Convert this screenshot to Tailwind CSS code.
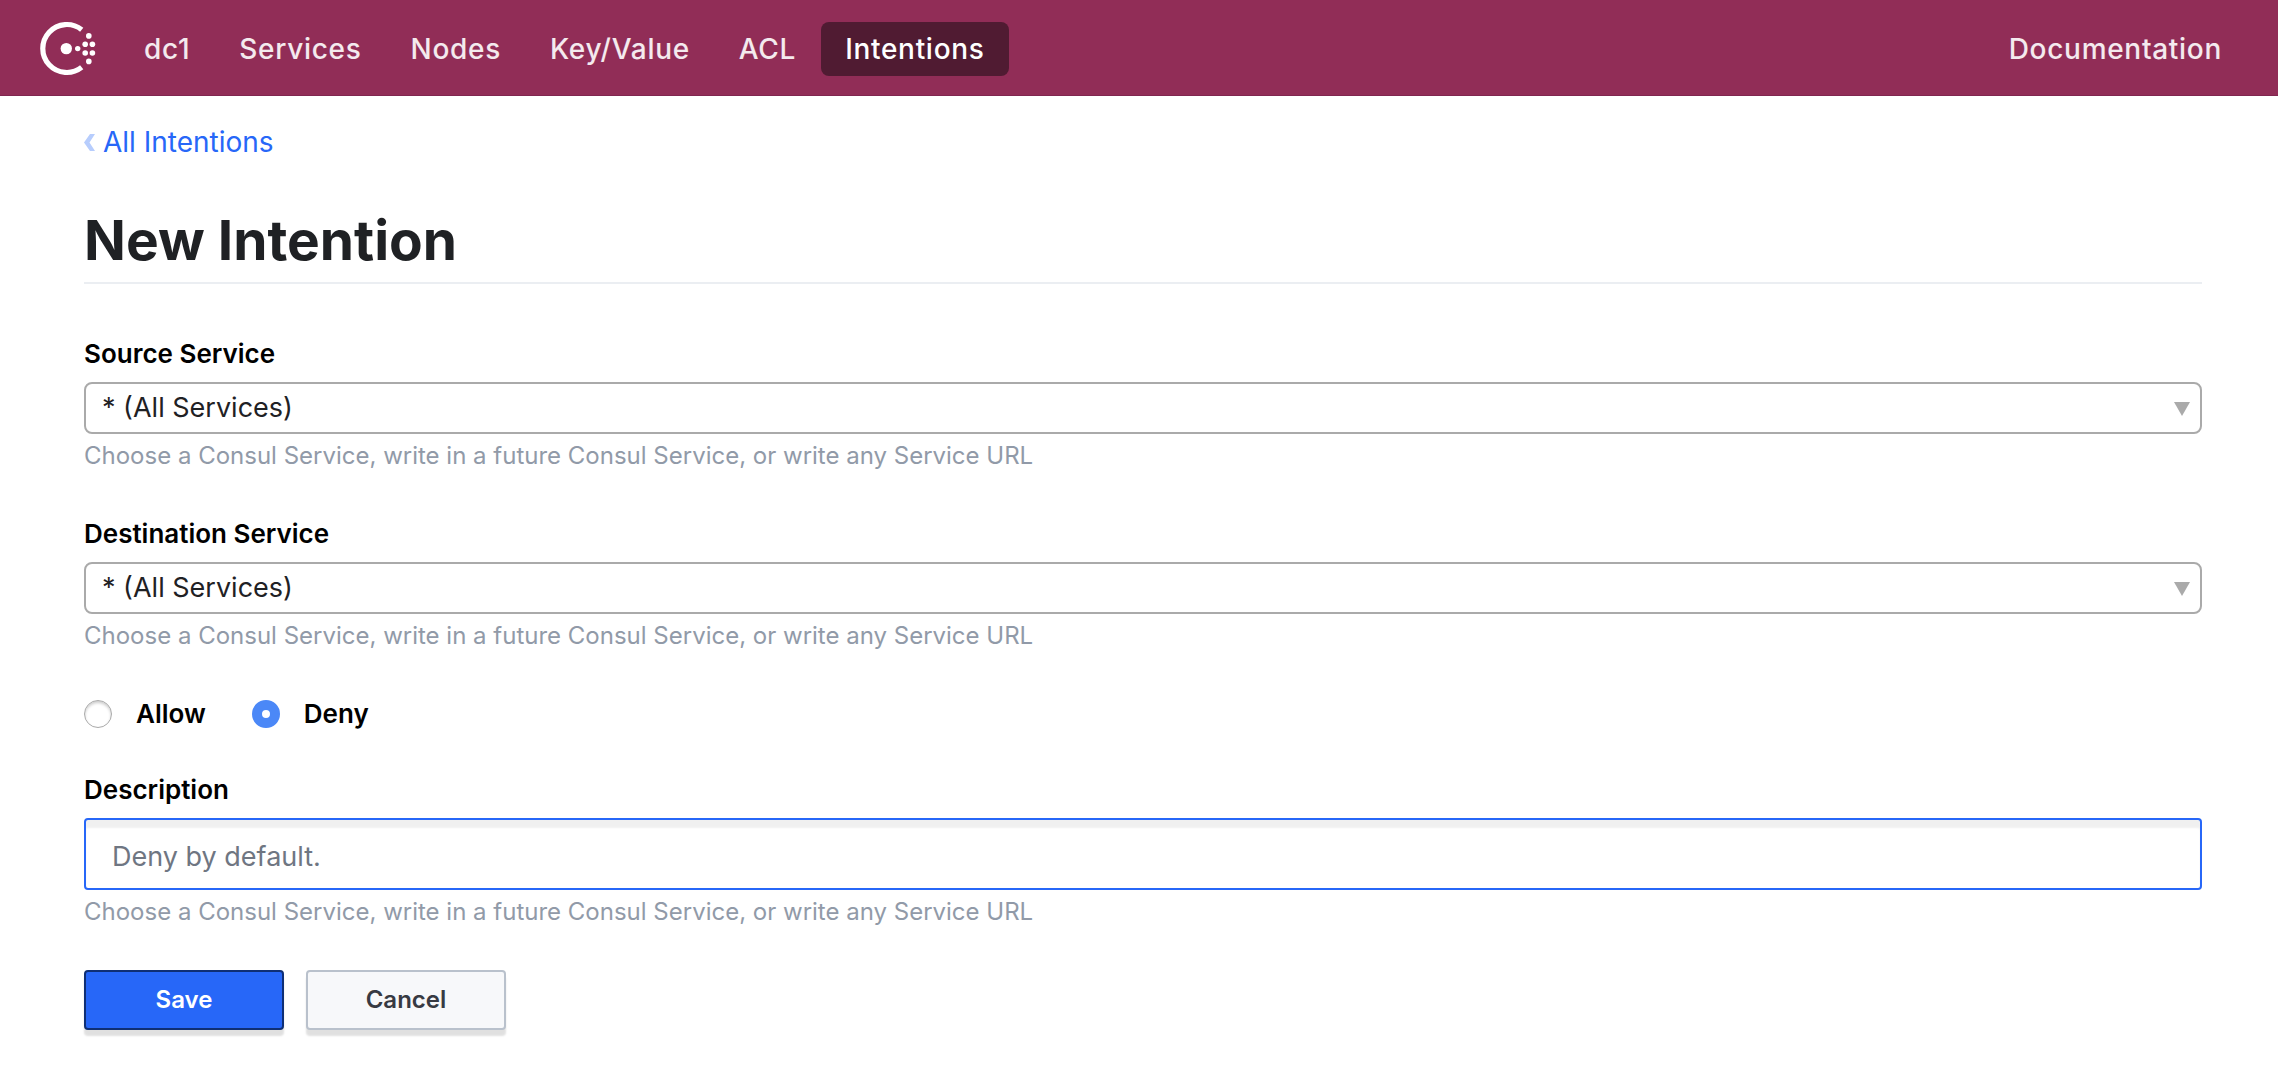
<!DOCTYPE html>
<html lang="en">
<head>
<meta charset="utf-8">
<title>New Intention - Consul</title>
<script src="https://cdn.jsdelivr.net/npm/@tailwindcss/browser@4"></script>
</head>
<body class="min-h-screen bg-white font-['Inter',sans-serif] text-[#1f2124]">
<header class="flex h-24 items-center border-b border-[#802650] bg-[#912d57] pt-[3px] pr-8 pl-10 text-[28px] leading-[54px] font-medium tracking-wide text-white/90">
  <a href="#" aria-label="Consul" class="mr-6 shrink-0">
    <svg class="block h-14 w-14" viewBox="0 1 56 56" fill="#fff">
      <path d="M41.7 9.700A24 24 0 1 0 41.700 47.300" fill="none" stroke="#fff" stroke-width="5.200"/>
      <circle cx="26.300" cy="28.600" r="5.700"/><circle cx="37.700" cy="28.600" r="2.700"/>
      <circle cx="45.200" cy="24.200" r="2.800"/><circle cx="52.400" cy="24.200" r="2.800"/>
      <circle cx="45.200" cy="33" r="2.800"/><circle cx="52.400" cy="33" r="2.800"/>
      <circle cx="48.800" cy="15.900" r="2.800"/><circle cx="48.800" cy="41.400" r="2.800"/>
    </svg>
  </a>
  <nav class="flex flex-1 items-center gap-px">
    <a href="#" class="px-6">dc1</a>
    <a href="#" class="px-6">Services</a>
    <a href="#" class="px-6">Nodes</a>
    <a href="#" class="px-6">Key/Value</a>
    <a href="#" class="px-6">ACL</a>
    <a href="#" aria-current="page" class="rounded-lg bg-[#501b32] px-6 text-white">Intentions</a>
    <a href="#" class="ml-auto px-6">Documentation</a>
  </nav>
</header>
<main class="pt-6 pr-[76px] pb-9 pl-[84px]">
  <nav aria-label="Breadcrumb" class="flex text-[28px] leading-[44px]">
    <a href="#" class="flex items-center gap-2 text-[#2767f8]">
      <svg class="h-[17px] w-[11px]" viewBox="0 0 11 17" fill="#b7cdfd"><path d="M6 0h5L5.500 8.500 11 17H6L0 8.500z"/></svg>
      All Intentions
    </a>
  </nav>
  <h1 class="mt-10 border-b-2 border-[#ebeef2] pb-1.5 text-[55px] leading-[72px] font-bold">New Intention</h1>
  <form class="mt-[50px]">
    <div class="mb-10">
      <label for="source" class="block text-[26px] leading-10 font-semibold text-black">Source Service</label>
      <div class="relative mt-2">
        <select id="source" class="block h-[52px] w-full appearance-none rounded-lg border-2 border-[#aaa] bg-white px-4 text-[27px] leading-[48px]"><option>* (All Services)</option></select>
        <svg class="pointer-events-none absolute top-5 right-3 h-3.5 w-4" viewBox="0 0 16 14" fill="#aaa"><path d="M0 0h16L8 14z"/></svg>
      </div>
      <p class="mt-1 text-[24px] leading-[36px] text-[#919aa8]">Choose a Consul Service, write in a future Consul Service, or write any Service URL</p>
    </div>
    <div class="mb-10">
      <label for="destination" class="block text-[26px] leading-10 font-semibold text-black">Destination Service</label>
      <div class="relative mt-2">
        <select id="destination" class="block h-[52px] w-full appearance-none rounded-lg border-2 border-[#aaa] bg-white px-4 text-[27px] leading-[48px]"><option>* (All Services)</option></select>
        <svg class="pointer-events-none absolute top-5 right-3 h-3.5 w-4" viewBox="0 0 16 14" fill="#aaa"><path d="M0 0h16L8 14z"/></svg>
      </div>
      <p class="mt-1 text-[24px] leading-[36px] text-[#919aa8]">Choose a Consul Service, write in a future Consul Service, or write any Service URL</p>
    </div>
    <div role="radiogroup" aria-label="Action" class="flex gap-[46px] text-[26px] leading-10 font-semibold text-black">
      <label class="flex items-center gap-6"><input type="radio" name="action" class="size-7 appearance-none rounded-full border border-[#aaa] bg-white shadow-[inset_0_2px_3px_#0003] checked:border-[10px] checked:border-[#4b88f7] checked:shadow-none">Allow</label>
      <label class="flex items-center gap-6"><input type="radio" name="action" checked class="size-7 appearance-none rounded-full border border-[#aaa] bg-white shadow-[inset_0_2px_3px_#0003] checked:border-[10px] checked:border-[#4b88f7] checked:shadow-none">Deny</label>
    </div>
    <div class="mt-9">
      <label for="description" class="block text-[26px] leading-10 font-semibold text-black">Description</label>
      <input id="description" type="text" placeholder="Deny by default." class="mt-2 block h-[72px] w-full rounded-sm border-2 border-[#2767f8] px-[26px] pt-1 text-[27px] shadow-[inset_0_8px_2px_#0000000f] outline-none placeholder:text-[#6f7682]">
      <p class="mt-1 text-[24px] leading-[36px] text-[#919aa8]">Choose a Consul Service, write in a future Consul Service, or write any Service URL</p>
    </div>
    <div class="mt-10 flex gap-[22px] text-[24px] leading-9 font-semibold">
      <button type="submit" class="h-[60px] w-[200px] rounded-sm border-2 border-[#0f2f75] bg-[#2767f8] text-white shadow-[0_6px_2px_#0000001f]">Save</button>
      <button type="button" class="h-[60px] w-[200px] rounded-sm border-2 border-[#b9c1cc] bg-[#f7f8fa] text-[#373a42] shadow-[0_6px_2px_#0000001f]">Cancel</button>
    </div>
  </form>
</main>
</body>
</html>
